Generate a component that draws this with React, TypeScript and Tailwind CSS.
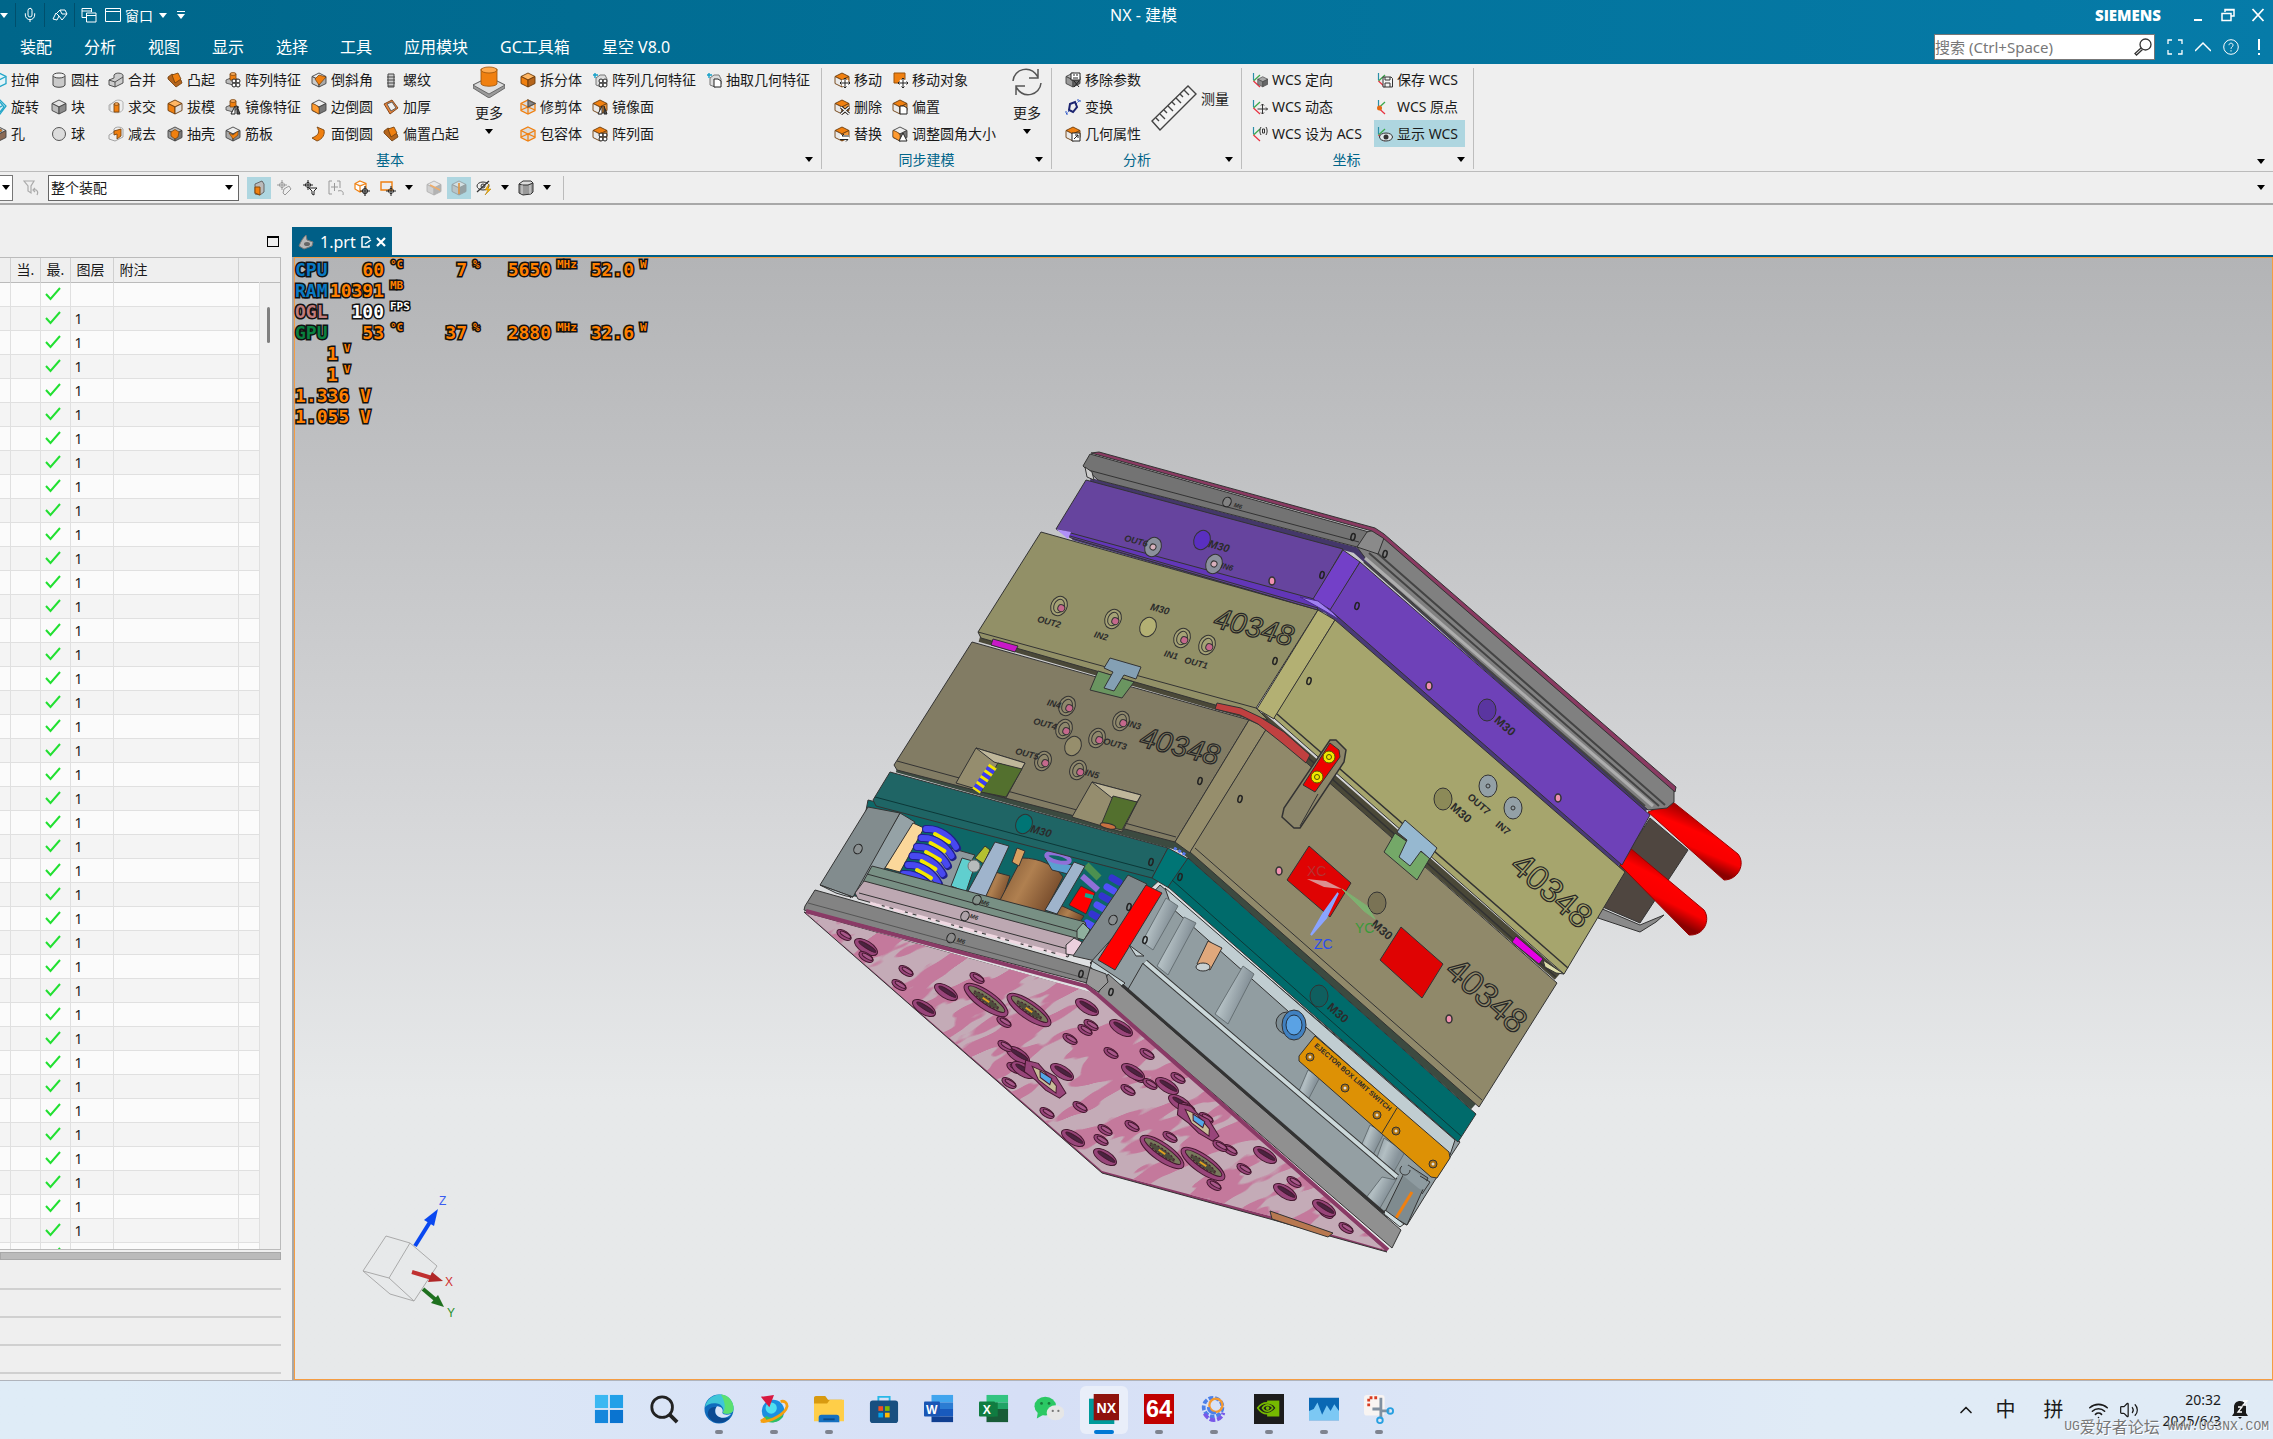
import type { ReactNode } from 'react'
import { ChevronUp, Mic, Volume2, Wifi } from 'lucide-react'

const LINE = '#333333'
const ORANGE = '#f08010'

/* ---------- small icons ---------- */

type Badge = 'grid' | 'mirror' | 'move' | 'x' | 'page' | 'swap' | 'tri' | 'arrow' | 'list' | 'plus'
type Shape =
  | 'cube' | 'cylinder' | 'sphere' | 'box' | 'wedge' | 'hole' | 'union' | 'intersect' | 'subtract' | 'bump' | 'draft'
  | 'shell' | 'boss' | 'rib' | 'chamfer' | 'blend' | 'curl' | 'thread' | 'slab' | 'wire' | 'wirecube' | 'ghost'
  | 'cap' | 'square' | 'link' | 'grey'

const Cube = ({ top = '#e4e4e4', left = '#bdbdbd', right = '#8c8c8c', stroke = '#444' }) => (
  <g stroke={stroke} strokeWidth="0.9" strokeLinejoin="round">
    <path d="M8 1 15 4.5 8 8 1 4.5Z" fill={top} />
    <path d="M1 4.5 8 8V15L1 11.5Z" fill={left} />
    <path d="M15 4.5 8 8V15L15 11.5Z" fill={right} />
  </g>
)

function ShapeArt({ shape }: { shape: Shape }) {
  switch (shape) {
    case 'cube':
      return <Cube />
    case 'grey':
      return <Cube top="#bbb" left="#999" right="#666" />
    case 'cylinder':
      return (
        <g stroke="#444" strokeWidth="1">
          <path d="M2 4V13C3 16 13 16 14 13V4Z" fill="#c9c9c9" />
          <ellipse cx="8" cy="3.5" rx="6" ry="2.5" fill="#f0f0f0" />
        </g>
      )
    case 'sphere':
      return <circle cx="8" cy="8" r="6.5" fill="#dcdcdc" stroke="#555" />
    case 'box':
      return (
        <g stroke="#22a5c8" strokeWidth="1.3" fill="#e4f4f8">
          <path d="M8 1 15 4.5V11.5L8 15 1 11.5V4.5Z" />
          <path d="M8 8V15M1 4.5 8 8 15 4.5" fill="none" />
        </g>
      )
    case 'wedge':
      return (
        <g stroke="#22a5c8" strokeWidth="1.3" fill="#d7eef5">
          <path d="M2 6 9 1 15 7 9 15 7 9Z" />
          <path d="M9 3 13 8 9 13M7 9 11 7" fill="none" />
        </g>
      )
    case 'hole':
      return (
        <>
          <Cube top="#ddd" left="#d58b55" right="#8a6a55" />
          <ellipse cx="8" cy="4.5" rx="3" ry="1.5" fill={ORANGE} stroke="#444" strokeWidth="0.6" />
        </>
      )
    case 'union':
      return (
        <g stroke="#444" strokeWidth="0.9" fill="#ccc">
          <path d="M1 8 6 6V3C8 0 14 1 15 3V11L7 15 1 13Z" />
          <path d="M1 8 7 10 15 5M7 10V15" fill="none" />
        </g>
      )
    case 'intersect':
      return (
        <g stroke="#aaa" strokeWidth="0.9" fill="#eee">
          <path d="M1 6 6 3 6 12 1 11Z" />
          <path d="M6 3C8 0 14 1 15 3V10C14 14 8 15 2 12V6Z" />
          <path d="M6 5H11V13H6Z" fill={ORANGE} stroke="#7a4510" />
          <ellipse cx="8.500" cy="5" rx="2.500" ry="1.300" fill="#ffb060" stroke="#7a4510" />
        </g>
      )
    case 'subtract':
      return (
        <g stroke="#999" strokeWidth="0.9" fill="#eee">
          <path d="M1 9 6 6V3C8 0 14 1 15 3V11L7 15 1 13Z" />
          <path d="M6 5 13 3V10L9 13V8L6 9Z" fill={ORANGE} stroke="#7a4510" />
        </g>
      )
    case 'bump':
      return (
        <g stroke="#6d3c0c" strokeWidth="0.8">
          <path d="M1 5 5 2 14 8 15 11 9 15 1 7Z" fill="#b5651d" />
          <path d="M5 3 11 1 14 7 8 11Z" fill={ORANGE} />
        </g>
      )
    case 'draft':
      return <Cube top="#ffb765" left={ORANGE} right="#ddd" stroke="#6d3c0c" />
    case 'shell':
      return (
        <>
          <Cube top="#bbb" left="#999" right="#777" />
          <path d="M8 3.500 12 6 11 11 8 13 4 10V6Z" fill={ORANGE} stroke="#6d3c0c" strokeWidth="0.7" />
        </>
      )
    case 'boss':
      return (
        <g stroke="#444" strokeWidth="0.8">
          <path d="M1 8 8 5 14 8 8 13 1 11Z" fill="#bbb" />
          <path d="M5 2H11V8H5Z" fill={ORANGE} stroke="#7a4510" />
          <ellipse cx="8" cy="2" rx="3" ry="1.400" fill="#ffb060" stroke="#7a4510" />
        </g>
      )
    case 'rib':
      return (
        <>
          <Cube top="#eee" left="#aaa" right="#888" />
          <path d="M4 7 8 9 13 5V9L8 13Z" fill={ORANGE} stroke="#6d3c0c" strokeWidth="0.6" />
        </>
      )
    case 'chamfer':
      return (
        <>
          <Cube top="#eee" left="#ccc" right="#aaa" />
          <path d="M8 3 15 5 8 13 4 7Z" fill={ORANGE} stroke="#6d3c0c" strokeWidth="0.7" />
        </>
      )
    case 'blend':
      return (
        <>
          <Cube top="#eee" left={ORANGE} right="#777" />
          <path d="M1 4.500C4 5 7 7 8 9V15L1 11Z" fill="#ff9b30" stroke="#6d3c0c" strokeWidth="0.6" />
        </>
      )
    case 'curl':
      return <path d="M6 1C9 6 8 9 1 12L6 15C12 13 14 8 13 4Z" fill={ORANGE} stroke="#7a4510" strokeWidth="0.9" />
    case 'thread':
      return (
        <g stroke="#444" strokeWidth="1" fill="#ccc">
          <path d="M5 2H11V15H5Z" />
          <path d="M4 5H12M4 8H12M4 11H12M5 14H11" />
        </g>
      )
    case 'slab':
      return (
        <g strokeWidth="0.9">
          <path d="M1 5 9 1 15 9 7 15Z" fill="#e5843c" stroke="#7a3c10" />
          <path d="M4 5 9 3 13 9 8 12Z" fill="#eee" stroke="#555" />
        </g>
      )
    case 'wire':
    case 'wirecube':
      return (
        <g stroke={ORANGE} strokeWidth="1.300" fill="#dcdcdc">
          <path d="M8 1 15 4.500V11.500L8 15 1 11.500V4.500Z" />
          <path d="M1 4.500 8 8 15 4.500M8 8V15M1 11 8 8 15 11" fill="none" />
          {shape === 'wirecube' && <path d="M8 1 15 4.500 8 8Z" fill="#888" stroke="#555" />}
        </g>
      )
    case 'ghost':
      return (
        <g>
          <path d="M4 6 8 3 13 3 15 7V12L9 15 4 13Z" fill="#ddd" stroke="#777" />
          <path d="M1 3H6M3 1V6" stroke="#16a0c8" strokeWidth="1.400" />
        </g>
      )
    case 'cap':
      return <Cube top={ORANGE} left="#e9e9e9" right="#f59a3a" stroke="#6d3c0c" />
    case 'square':
      return <path d="M2 1H13V11H2Z" fill={ORANGE} stroke="#9a5208" />
    case 'link':
      return (
        <g fill="none">
          <path d="M1 15 5 11M11 5 15 1M12 1H15V4M1 12V15H4" stroke="#2b55c8" strokeDasharray="2 1" />
          <path d="M5 5 10 3 12 8 8 13 4 11Z" stroke="#1c2470" strokeWidth="2" />
        </g>
      )
  }
}

function BadgeArt({ badge }: { badge: Badge }) {
  const p = { stroke: '#222', strokeWidth: 1, fill: '#fff' }
  switch (badge) {
    case 'grid':
      return <g {...p}><circle cx="9" cy="9" r="2" /><circle cx="13" cy="9" r="2" /><circle cx="9" cy="13" r="2" /><circle cx="13" cy="13" r="2" /></g>
    case 'mirror':
      return <g {...p}><path d="M10 7V15H6Z" /><path d="M12 7V15H15Z" fill="#555" /></g>
    case 'move':
      return <g><circle cx="11" cy="11" r="4" fill="#fff" /><path d="M11 6V16M6 11H16M9.500 7.500 11 6 12.500 7.500M9.500 14.500 11 16 12.500 14.500M7.500 9.500 6 11 7.500 12.500M14.500 9.500 16 11 14.500 12.500" stroke="#222" fill="none" /></g>
    case 'x':
      return <g><path d="M7 8 15 15M15 8 7 15" stroke="#222" strokeWidth="3" /><path d="M7 8 15 15M15 8 7 15" stroke="#fff" strokeWidth="1.200" /></g>
    case 'page':
      return <path d="M8 7H12L15 9V15H8Z" {...p} />
    case 'swap':
      return <g><path d="M6 9H15V14H6Z" fill="#fff" /><path d="M15 10H8L10 8M6 13.500H14L12 15.500" stroke="#222" fill="none" /></g>
    case 'tri':
      return <path d="M11 7 15 15H7Z" {...p} />
    case 'arrow':
      return <g><path d="M7 7H15V15H7Z" {...p} /><path d="M9 13 13 9M10 9H13V12" stroke="#222" fill="none" /></g>
    case 'list':
      return <g><path d="M6 1H15V8H6Z" {...p} /><path d="M8 3H10M11 3H13M8 6H13M9 9 14 15M14 9 9 15" stroke="#222" /></g>
    case 'plus':
      return <path d="M10 5V15M5 10H15" stroke="#222" />
  }
}

const PartIcon = ({ shape, badge }: { shape: Shape; badge?: Badge }) => (
  <svg viewBox="0 0 16 16" className="size-4 shrink-0">
    <ShapeArt shape={shape} />
    {badge && <BadgeArt badge={badge} />}
  </svg>
)

const WcsIcon = ({ kind }: { kind: 'orient' | 'move' | 'acs' | 'save' | 'origin' | 'eye' }) => (
  <svg viewBox="0 0 16 16" className="size-4 shrink-0" fill="none">
    <path d="M1.500 1V8" stroke="#2a8fa8" strokeWidth="1.200" />
    <path d="M1.500 9 8 3" stroke="#3aa84a" strokeWidth="1.200" />
    <path d="M1.500 9 8 15" stroke="#e8303f" strokeWidth="1.200" />
    {kind === 'orient' && <g transform="translate(5 4) scale(.72)"><Cube top="#aaa" left="#888" right="#666" /></g>}
    {kind === 'move' && <path d="M10.500 5V15M5.500 10H15.500M9 6.500 10.500 5 12 6.500M9 13.500 10.500 15 12 13.500M14 8.500 15.500 10 14 11.500" stroke="#333" />}
    {kind === 'acs' && <path d="M9 1C7.500 3 7.500 7 9 9M14 1C15.500 3 15.500 7 14 9M10.500 3H12.500V7H10.500Z" stroke="#333" />}
    {kind === 'save' && <g stroke="#333"><path d="M6 5H14L15.500 6.500V15H6Z" fill="#f4f4f4" /><path d="M8 5V8H13V5M8 15V11H13V15" /></g>}
    {kind === 'origin' && <circle cx="2.500" cy="9" r="2.500" fill="#e46a14" />}
    {kind === 'eye' && <g><ellipse cx="9" cy="11" rx="6.500" ry="4" fill="#dfe8ea" stroke="#333" /><circle cx="9" cy="11" r="2.500" fill="#333" /></g>}
  </svg>
)

const Caret = ({ light }: { light?: boolean }) => (
  <svg viewBox="0 0 8 5" className={light ? 'h-[5px] w-2 shrink-0 fill-white' : 'h-[5px] w-2 shrink-0 fill-black'}>
    <path d="M0 0H8L4 5Z" />
  </svg>
)

const CaretButton = ({ label }: { label: string }) => (
  <button aria-label={label} className="flex h-5 w-6 items-center justify-center"><Caret /></button>
)

/* ---------- title bar ---------- */

const MENUS = ['装配', '分析', '视图', '显示', '选择', '工具', '应用模块', 'GC工具箱', '星空 V8.0']

function TitleBar() {
  return (
    <header className="shrink-0 bg-linear-to-r from-[#00668a] via-[#02729a] to-[#067ba8] text-white">
      <div className="grid h-[30px] grid-cols-[1fr_auto_1fr] items-center">
        <div className="flex h-6 items-center text-[14px]">
          <div className="flex w-[15px] shrink-0"><Caret light /></div>
          <button aria-label="语音" className="flex h-6 w-[30px] items-center justify-center border-x border-[#004f6c]"><Mic size={16} strokeWidth={1.5} /></button>
          <button aria-label="重复命令" className="flex h-6 w-[30px] items-center justify-center border-r border-[#004f6c]">
            <svg viewBox="0 0 16 16" className="size-4" fill="none" stroke="#fff"><path d="M1 12 4 6 7 9 5 13ZM5 6 8 3 13 3 15 7 10 13 7 9M8 3 10 7 15 7" /></svg>
          </button>
          <button aria-label="层叠窗口" className="ml-1.5">
            <svg viewBox="0 0 16 16" className="size-4" fill="none" stroke="#fff"><path d="M5 10.500H1V1.500H10.500V5M1 4H10M5.500 6H15V15H5.500ZM5.500 8.500H15" /></svg>
          </button>
          <button className="ml-2 flex items-center gap-1">
            <svg viewBox="0 0 16 16" className="size-4" fill="none" stroke="#fff"><path d="M.5 1.500H15.500V14.500H.5ZM.5 4.500H15.500" /></svg>
            <span>窗口</span>
            <span className="ml-0.5"><Caret light /></span>
          </button>
          <button aria-label="自定义" className="ml-2.5 flex flex-col items-center gap-0.5 border-t border-white pt-0.5"><Caret light /></button>
        </div>
        <h1 className="pl-3.5 text-base">NX - 建模</h1>
        <div className="flex items-center justify-end gap-4 pr-2">
          <span className="mr-3.5 font-['Open_Sans','Liberation_Sans',sans-serif] text-[15px] font-extrabold">SIEMENS</span>
          <button aria-label="最小化" className="flex h-4 w-3.5 items-end justify-center pb-0.5"><span className="h-0.5 w-2 bg-white" /></button>
          <button aria-label="还原" className="w-3.5">
            <svg viewBox="0 0 14 14" className="size-3.5" fill="none" stroke="#fff" strokeWidth="1.500"><path d="M4 4V1.500H13V8H10M1 5.500H10V12.500H1ZM4 2H13" /></svg>
          </button>
          <button aria-label="关闭" className="w-3.5">
            <svg viewBox="0 0 14 14" className="size-3.5" stroke="#fff" strokeWidth="1.800"><path d="M1.500 1 12.500 13M12.500 1 1.500 13" /></svg>
          </button>
        </div>
      </div>
      <div className="flex h-[34px] items-center justify-between">
        <nav className="flex gap-8 pl-5 text-base">
          {MENUS.map(m => <button key={m} className="whitespace-nowrap">{m}</button>)}
        </nav>
        <div className="flex items-center gap-3 pr-1.5">
          <label className="flex h-[26px] w-[221px] items-center border border-[#777] bg-white pr-0.5">
            <input type="text" aria-label="搜索" placeholder="搜索 (Ctrl+Space)" className="min-w-0 flex-1 text-[15px] text-black outline-none placeholder:text-[#777]" />
            <svg viewBox="0 0 18 18" className="size-[18px]" fill="none" stroke="#333" strokeWidth="1.300"><circle cx="11.500" cy="6.500" r="5.500" /><path d="M7 10 1 15.500 2.500 17 8.500 11.500" /></svg>
          </label>
          <button aria-label="全屏">
            <svg viewBox="0 0 16 16" className="size-4" fill="none" stroke="#fff" strokeWidth="1.300"><path d="M1 5V1H5M11 1H15V5M15 11V15H11M5 15H1V11" /></svg>
          </button>
          <button aria-label="折叠功能区">
            <svg viewBox="0 0 16 16" className="size-4" fill="none" stroke="#fff" strokeWidth="1.500"><path d="M0 12 8 4 16 12" /></svg>
          </button>
          <button aria-label="帮助">
            <svg viewBox="0 0 16 16" className="size-4" fill="none" stroke="#fff"><circle cx="8" cy="8" r="7.300" /><path d="M6 6.200C6 3.500 10 3.500 10 6.200 10 8 8 7.800 8 9.800M8 11.200V12.500" /></svg>
          </button>
          <button aria-label="提示" className="flex w-4 justify-center">
            <svg viewBox="0 0 4 16" className="h-4 w-1 fill-white"><path d="M1 0H3V11H1ZM1 14H3V16H1Z" /></svg>
          </button>
        </div>
      </div>
    </header>
  )
}

/* ---------- ribbon ---------- */

type Cmd = { label: string; icon: ReactNode; active?: boolean } | null

const cmd = (label: string, shape: Shape, badge?: Badge): Cmd => ({ label, icon: <PartIcon shape={shape} badge={badge} /> })

const BASIC: { width: string; items: Cmd[] }[] = [
  { width: 'w-[60px]', items: [cmd('拉伸', 'box'), cmd('旋转', 'wedge'), cmd('孔', 'hole')] },
  { width: 'w-[57px]', items: [cmd('圆柱', 'cylinder'), cmd('块', 'cube'), cmd('球', 'sphere')] },
  { width: 'w-[59px]', items: [cmd('合并', 'union'), cmd('求交', 'intersect'), cmd('减去', 'subtract')] },
  { width: 'w-[58px]', items: [cmd('凸起', 'bump'), cmd('拔模', 'draft'), cmd('抽壳', 'shell')] },
  { width: 'w-[86px]', items: [cmd('阵列特征', 'boss', 'grid'), cmd('镜像特征', 'boss', 'mirror'), cmd('筋板', 'rib')] },
  { width: 'w-[72px]', items: [cmd('倒斜角', 'chamfer'), cmd('边倒圆', 'blend'), cmd('面倒圆', 'curl')] },
  { width: 'w-[90px]', items: [cmd('螺纹', 'thread'), cmd('加厚', 'slab'), cmd('偏置凸起', 'bump')] },
]

const BASIC_MORE: { width: string; items: Cmd[] }[] = [
  { width: 'w-[72px]', items: [{ label: '拆分体', icon: <svg viewBox="0 0 16 16" className="size-4 shrink-0"><Cube top="#ffb765" left={ORANGE} right="#b5651d" stroke="#6d3c0c" /></svg> }, cmd('修剪体', 'wirecube'), cmd('包容体', 'wire')] },
  { width: 'w-[114px]', items: [cmd('阵列几何特征', 'ghost', 'grid'), cmd('镜像面', 'cap', 'mirror'), cmd('阵列面', 'cap', 'grid')] },
  { width: 'w-[115px]', items: [cmd('抽取几何特征', 'ghost', 'page')] },
]

function Column({ width, items }: { width: string; items: Cmd[] }) {
  return (
    <div className={`shrink-0 ${width}`}>
      {items.map((c, i) => c && (
        <button key={i} className={c.active ? 'flex h-[27px] w-full items-center gap-1 bg-[#aed6e0] px-[3px] whitespace-nowrap' : 'flex h-[27px] items-center gap-1 whitespace-nowrap'}>
          {c.icon}
          <span>{c.label}</span>
        </button>
      ))}
    </div>
  )
}

function Group({ title, className = '', children }: { title: string; className?: string; children: ReactNode }) {
  return (
    <>
      <section className={`shrink-0 ${className}`}>
        <div className="flex h-[81px]">{children}</div>
        <div className="flex h-6 items-center">
          <h2 className="flex-1 pr-2 text-center text-[#00658a]">{title}</h2>
          <CaretButton label={`${title}选项`} />
        </div>
      </section>
      <div className="my-0.5 w-px shrink-0 bg-[#bdbdbd]" />
    </>
  )
}

const More = ({ icon }: { icon: ReactNode }) => (
  <button className="flex w-8 shrink-0 flex-col items-center">
    {icon}
    <span className="mt-1 whitespace-nowrap">更多</span>
    <span className="mt-1.5"><Caret /></span>
  </button>
)

function Ribbon() {
  return (
    <div className="flex h-[108px] shrink-0 overflow-hidden border-b border-[#bbb] pt-0.5 text-[14px]">
      <Group title="基本" className="-ml-4 pl-[7px]">
        {BASIC.map((c, i) => <Column key={i} {...c} />)}
        <div className="mr-[15px] flex">
          <More
            icon={
              <svg viewBox="0 0 32 32" className="size-8" stroke="#555" strokeWidth="0.800">
                <path d="M0 19 16 11 32 19V22L16 32 0 22Z" fill="#9a9a9a" />
                <path d="M0 19 16 11 32 19 16 28Z" fill="#dedede" />
                <path d="M8 3V18C10 21 22 21 24 18V3Z" fill={ORANGE} stroke="#9a5208" />
                <ellipse cx="16" cy="4" rx="8" ry="3" fill="#ffa94d" stroke="#9a5208" />
              </svg>
            }
          />
        </div>
        {BASIC_MORE.map((c, i) => <Column key={i} {...c} />)}
      </Group>
      <Group title="同步建模" className="pl-3">
        <Column width="w-[58px]" items={[cmd('移动', 'cap', 'move'), cmd('删除', 'cap', 'x'), cmd('替换', 'cap', 'swap')]} />
        <Column width="w-[119px]" items={[cmd('移动对象', 'square', 'move'), cmd('偏置', 'cap', 'page'), cmd('调整圆角大小', 'blend', 'tri')]} />
        <div className="mr-2 flex">
          <More
            icon={
              <svg viewBox="0 0 32 32" className="size-8" fill="none" stroke="#555" strokeWidth="1.500">
                <path d="M2 15C3 3 19-2 27 11M27 3V12H18M30 17C29 29 13 34 5 21M5 29V20H14" />
              </svg>
            }
          />
        </div>
      </Group>
      <Group title="分析" className="pl-[13px]">
        <Column width="w-[86px]" items={[cmd('移除参数', 'grey', 'list'), cmd('变换', 'link'), cmd('几何属性', 'cap', 'arrow')]} />
        <button className="mr-3 flex h-[64px] items-center gap-1 whitespace-nowrap">
          <svg viewBox="0 0 46 46" className="mt-5 size-[46px]" fill="#f4f4f4" stroke="#444" strokeWidth="1.400">
            <path d="M1 36 37 1 45 9 9 45Z" />
            <path d="M5 33 8 36M9 29 14 34M13 25 16 28M17 21 22 26M21 17 24 20M25 13 30 18M29 9 32 12M33 5 38 10" />
          </svg>
          <span>测量</span>
        </button>
      </Group>
      <Group title="坐标" className="pl-2.5">
        <Column
          width="w-[122px]"
          items={[
            { label: 'WCS 定向', icon: <WcsIcon kind="orient" /> },
            { label: 'WCS 动态', icon: <WcsIcon kind="move" /> },
            { label: 'WCS 设为 ACS', icon: <WcsIcon kind="acs" /> },
          ]}
        />
        <div className="mr-2 w-[91px]">
          <div className="pl-[3px]">
            <Column width="w-full" items={[{ label: '保存 WCS', icon: <WcsIcon kind="save" /> }, { label: 'WCS 原点', icon: <WcsIcon kind="origin" /> }]} />
          </div>
          <Column width="w-full" items={[{ label: '显示 WCS', icon: <WcsIcon kind="eye" />, active: true }]} />
        </div>
      </Group>
      <div className="flex flex-1 items-end justify-end">
        <CaretButton label="功能区选项" />
      </div>
    </div>
  )
}

function Tool({ label, active, children }: { label: string; active?: boolean; children: ReactNode }) {
  return (
    <button aria-label={label} className={active ? 'flex h-[22px] w-6 items-center justify-center bg-[#aed6e0]' : 'flex h-[22px] w-[26px] items-center justify-center'}>
      {children}
    </button>
  )
}

const Cross = ({ color = '#222' }) => <path d="M6 0V10M1 5H11M6 2.500A2.500 2.500 0 1 0 6.010 2.500" stroke={color} fill="none" />

function SelectionBar() {
  return (
    <div className="flex h-[33px] shrink-0 items-center border-b-2 border-[#a8a8a8]">
      <button aria-label="类型过滤器" className="flex h-[26px] w-[13px] items-center justify-center border border-l-0 border-[#777] bg-white"><Caret /></button>
      <span className="flex w-[35px] justify-center">
        <svg viewBox="0 0 16 16" className="size-4" fill="none" stroke="#aaa" strokeWidth="1.200"><path d="M1 1H11L8 6V13L5 11V6ZM14 15C16 11 13 9 10 10M12 8 10 10 12 12" /></svg>
      </span>
      <span className="relative flex h-[26px] w-[191px]">
        <select aria-label="选择范围" className="w-full appearance-none border border-[#666] bg-white px-0.5 text-[14px]">
          <option>整个装配</option>
        </select>
        <span className="pointer-events-none absolute top-2.5 right-1.5 flex"><Caret /></span>
      </span>
      <div className="ml-2 flex items-center">
        <Tool label="实体" active><svg viewBox="0 0 16 16" className="size-4"><path d="M4 4 11 1 13 4 13 12 9 15 4 14Z" fill="#bbb" stroke="#666" /><path d="M4 7H9V15L4 13Z" fill={ORANGE} stroke="#8a4a08" /></svg></Tool>
        <Tool label="点"><svg viewBox="0 0 16 16" className="size-4"><Cross color="#999" /><path d="M8 9 13 6 15 9 9 15 7 13Z" fill="none" stroke="#999" /></svg></Tool>
        <Tool label="过滤"><svg viewBox="0 0 16 16" className="size-4"><Cross /><path d="M7 8H15L12 11V15L10 14V11Z" fill="#fff" stroke="#222" /></svg></Tool>
        <Tool label="重置"><svg viewBox="0 0 16 16" className="size-4" fill="none" stroke="#999"><path d="M4 1H1V14H4M9 1H12V8M3 7H10M6.500 3V11M15 15C16 11 13 10 10 11" /></svg></Tool>
        <Tool label="高亮"><svg viewBox="0 0 16 16" className="size-4" fill="#fff" stroke={ORANGE} strokeWidth="1.200"><path d="M6 1 12 3.500V9L6 12 1 9V3.500ZM1 3.500 6 6 12 3.500M6 6V12" /><path d="M11 6V16M6 11H16M11 8.500A2.500 2.500 0 1 0 11.010 8.500" stroke="#222" /></svg></Tool>
        <Tool label="框选"><svg viewBox="0 0 16 16" className="size-4" fill="none"><path d="M1 2H12V10H1Z" stroke={ORANGE} strokeWidth="1.400" /><path d="M11 6V16M6 11H16M11 8.500A2.500 2.500 0 1 0 11.010 8.500" stroke="#222" /></svg></Tool>
        <span className="mr-2 ml-1"><Caret /></span>
        <Tool label="面"><svg viewBox="0 0 16 16" className="size-4 opacity-60"><Cube stroke="#888" /><path d="M4 5 14 10" stroke={ORANGE} strokeWidth="1.500" /></svg></Tool>
        <Tool label="边" active><svg viewBox="0 0 16 16" className="size-4 opacity-70"><Cube stroke="#888" /><path d="M8 3V14" stroke={ORANGE} strokeWidth="1.800" /></svg></Tool>
        <Tool label="显示隐藏"><svg viewBox="0 0 16 16" className="size-4" fill="none"><ellipse cx="7" cy="6" rx="6" ry="4" stroke="#333" /><circle cx="7" cy="6" r="2" stroke="#333" /><path d="M1 12 13 1" stroke="#333" strokeWidth="1.300" /><path d="M13 4 9 10H12L9 15 15 9H12Z" fill="#ffb900" stroke="#a87400" strokeWidth="0.500" /></svg></Tool>
        <span className="mr-1 ml-1"><Caret /></span>
        <Tool label="渲染样式"><svg viewBox="0 0 16 16" className="size-4"><path d="M1 4V13L5 15 13 14 15 12V3Z" fill="#999" stroke="#333" /><path d="M1 4 5 1 13 1 15 3 10 5 4 5Z" fill="#ddd" stroke="#333" /><path d="M4 5V14M12 5V14" stroke="#ddd" /></svg></Tool>
        <span className="ml-1"><Caret /></span>
        <span className="ml-3 h-6 w-px bg-[#bbb]" />
      </div>
      <span className="flex-1" />
      <CaretButton label="选择条选项" />
    </div>
  )
}

/* ---------- part navigator ---------- */

// assembly root and the row under the fold carry no layer number
const ROWS = ['', ...Array.from({ length: 39 }, () => '1'), '']

function Navigator() {
  return (
    <aside className="flex w-[281px] shrink-0 flex-col">
      <div className="flex h-[52px] shrink-0 items-end justify-end">
        <button aria-label="最大化面板" className="mr-0.5 mb-2.5 h-[11px] w-3 border border-t-2 border-black" />
      </div>
      <div className="relative min-h-0 flex-1 overflow-hidden border-t border-r border-b border-[#bbb]">
        <table className="w-full table-fixed border-collapse text-[14px]">
          <colgroup>
            <col className="w-2.5" /><col className="w-[30px]" /><col className="w-[30px]" /><col className="w-[43px]" /><col className="w-[125px]" /><col className="w-[21px]" /><col />
          </colgroup>
          <thead>
            <tr className="h-6 border-b border-[#bbb] text-left [&>th]:overflow-hidden [&>th]:border-r [&>th]:border-[#d0d0d0] [&>th]:font-normal [&>th]:whitespace-nowrap">
              <th />
              <th className="pl-1.5">当.</th>
              <th className="pl-1.5">最.</th>
              <th className="pl-1.5">图层</th>
              <th className="pl-1.5">附注</th>
              <td /><td />
            </tr>
          </thead>
          <tbody>
            {ROWS.map((layer, i) => (
              <tr key={i} className="h-6 odd:bg-[#fbfbfb] even:bg-[#f4f4f4] [&>td]:border-r [&>td]:border-b [&>td]:border-[#e0e0e0] [&>td]:p-0">
                <td /><td />
                <td>
                  <svg viewBox="0 0 16 14" className="ml-1 h-3.5 w-4" fill="none" stroke="#22e032" strokeWidth="2"><path d="M1 7 5.500 12 15 1" /></svg>
                </td>
                <td><span className="pl-1">{layer}</span></td>
                <td /><td />
                <td className="border-none! bg-[#efefef]" />
              </tr>
            ))}
          </tbody>
        </table>
        <div className="absolute top-[49px] right-2.5 h-9 w-[3px] rounded-full bg-[#808080]" />
      </div>
      <div className="mt-0.5 h-2 shrink-0 border border-[#a8a8a8] bg-[#bbb]" />
      <div className="shrink-0 pt-0.5 pb-1.5">
        {['依存关系', '细节', '预览', '属性'].map(s => (
          <div key={s} aria-label={s} className="h-7 border-b-2 border-[#d0d0d0]" />
        ))}
      </div>
    </aside>
  )
}

/* ---------- hardware monitor ---------- */

type OsdRow = { name: string; color: string; cells: [string, string][]; white?: boolean }

const OSD: OsdRow[] = [
  { name: 'CPU', color: 'text-[#0a7ac4]', cells: [['60', '°C'], ['7', '%'], ['5650', 'MHz'], ['52.0', 'W']] },
  { name: 'RAM', color: 'text-[#0a7ac4]', cells: [['10391', 'MB']] },
  { name: 'OGL', color: 'text-[#c07c7c]', cells: [['100', 'FPS']], white: true },
  { name: 'GPU', color: 'text-[#0a8040]', cells: [['53', '°C'], ['37', '%'], ['2880', 'MHz'], ['32.6', 'W']] },
]

const Osd = () => (
  <div className="absolute top-0.5 left-px font-['DejaVu_Sans_Mono','Liberation_Mono',monospace] text-[18px] leading-[21px] font-bold whitespace-pre text-[#ff8000] [-webkit-text-stroke:3px_#111] [paint-order:stroke_fill]">
    {OSD.map(r => (
      <div key={r.name} className="grid h-[21px] grid-cols-[34px_55px_41px_42px_38px_46px_37px_46px_20px]">
        <span className={r.color}>{r.name}</span>
        {r.cells.map(([v, u]) => (
          <span key={u} className={r.white ? 'contents text-white' : 'contents'}>
            <span className="flex justify-end">{v}</span>
            <span className="pl-1.5 text-[11px] leading-3">{u}</span>
          </span>
        ))}
      </div>
    ))}
    {['a', 'b'].map(k => (
      <div key={k} className="flex h-[21px] pl-8">
        <span>1</span>
        <span className="pl-1.5 text-[11px] leading-3">V</span>
      </div>
    ))}
    <div>1.336 V</div>
    <div>1.055 V</div>
  </div>
)

/* ---------- mould model ---------- */

function Face({ p, fill, stroke = LINE }: { p: string; fill: string; stroke?: string }) {
  return <polygon points={p} fill={fill} stroke={stroke} strokeWidth="1" strokeLinejoin="round" />
}

function Mark({ x, y, r, size, children, outline }: { x: number; y: number; r: number; size: number; children: string; outline?: boolean }) {
  return (
    <text
      transform={`translate(${x} ${y}) rotate(${r})`}
      textAnchor="middle"
      dominantBaseline="central"
      fontSize={size}
      fontStyle={r < 20 ? 'italic' : 'normal'}
      fontWeight={outline ? 'normal' : 'bold'}
      fontFamily={outline ? "'Liberation Sans Narrow', 'Liberation Sans', sans-serif" : undefined}
      fill={outline ? 'none' : '#2b2b2b'}
      stroke={outline ? '#262626' : 'none'}
      strokeWidth={outline ? 1.2 : 0}
    >
      {children}
    </text>
  )
}

// [x, y, kind, fill]: p = ported hole, d = disc, h = plain hole
const LEFT_HOLES: [number, number, 'p' | 'd' | 'h', string][] = [
  [1059, 606, 'p', '#a5a275'], [1113, 619, 'p', '#a5a275'], [1182, 638, 'p', '#a5a275'], [1207, 645, 'p', '#a5a275'],
  [1148, 627, 'h', '#b3b073'],
  [1067, 706, 'p', '#8f886c'], [1121, 721, 'p', '#8f886c'], [1064, 729, 'p', '#8f886c'], [1097, 738, 'p', '#8f886c'],
  [1043, 761, 'p', '#8f886c'], [1078, 770, 'p', '#8f886c'], [1073, 746, 'h', '#968e6c'],
  [1153, 547, 'd', '#8b909c'], [1214, 564, 'd', '#8b909c'], [1202, 540, 'h', '#5a2fc0'], [1024, 824, 'h', '#007575'],
]

const RIGHT_HOLES: [number, number, string, boolean][] = [
  [1487, 710, '#5a35a0', false], [1443, 799, '#8c8a58', false], [1377, 903, '#7a7355', false], [1319, 996, '#0f5f5f', false],
  [1488, 786, '#93a0a6', true], [1513, 808, '#93a0a6', true],
]

const PINS: [number, number][] = [[1272, 581], [1279, 871], [1429, 686], [1558, 798], [1449, 1019]]

const DOTS: [number, number][] = [
  [1322, 575], [1275, 661], [1309, 681], [1357, 606], [1200, 781], [1240, 799], [1151, 862], [1180, 877], [1353, 537],
  [1385, 554], [1081, 974], [1111, 992], [1129, 907], [1145, 940],
]

const LEFT_MARKS: [number, number, string, number][] = [
  [1136, 541, 'OUT6', 9], [1219, 546, 'M30', 11], [1227, 567, 'IN6', 8], [1238, 506, 'M6', 6], [1049, 622, 'OUT2', 9],
  [1101, 636, 'IN2', 9], [1160, 609, 'M30', 10], [1171, 655, 'IN1', 9], [1196, 663, 'OUT1', 9], [1054, 704, 'IN4', 9],
  [1045, 724, 'OUT4', 9], [1134, 725, 'IN3', 9], [1115, 744, 'OUT3', 9], [1027, 754, 'OUT5', 9], [1092, 774, 'IN5', 9],
  [1041, 831, 'M30', 11], [985, 903, 'M6', 6], [974, 917, 'M6', 6], [961, 941, 'M6', 6],
]

const RIGHT_MARKS: [number, number, string, number][] = [
  [1505, 726, 'M30', 12], [1479, 804, 'OUT7', 10], [1503, 828, 'IN7', 10], [1461, 813, 'M30', 12], [1382, 930, 'M30', 12],
  [1338, 1013, 'M30', 12],
]

const SLOTS: [number, number][] = [
  [844, 935], [866, 947], [866, 957], [906, 971], [946, 992], [977, 978], [899, 985], [924, 1008], [1004, 1022],
  [1070, 1039], [1087, 1007], [1091, 1025], [1085, 1030], [1121, 1028], [1111, 1053], [1147, 1054], [1062, 1072],
  [1009, 1083], [1178, 1078], [1167, 1086], [1128, 1090], [1138, 1077], [1133, 1072], [1150, 1084], [1047, 1113],
  [1073, 1138], [1105, 1130], [1101, 1140], [1105, 1157], [1132, 1126], [1170, 1137], [1265, 1155], [1244, 1169],
  [1294, 1182], [1285, 1192], [1214, 1185], [1326, 1213], [1324, 1208], [1346, 1228], [1080, 1107], [1018, 1055],
  [1005, 1046], [1014, 1068], [1023, 1070], [1230, 1150], [1220, 1146], [1180, 1103], [1188, 1108], [1206, 1118],
]

function Mould() {
  return (
    <g>
      <defs>
        <linearGradient id="rod" x1="0" y1="0" x2=".8" y2=".4"><stop offset="0" stopColor="#87939a" /><stop offset=".5" stopColor="#b3bfc3" /><stop offset="1" stopColor="#87939a" /></linearGradient>
        <linearGradient id="copper" x1="0" y1="0" x2="1" y2=".5"><stop offset="0" stopColor="#7a5230" /><stop offset=".5" stopColor="#b08050" /><stop offset="1" stopColor="#74492a" /></linearGradient>
        <linearGradient id="redrod" x1=".6" y1=".2" x2=".35" y2=".7"><stop offset="0" stopColor="#a80000" /><stop offset=".35" stopColor="#ff0000" /><stop offset=".7" stopColor="#f80000" /><stop offset="1" stopColor="#8a0000" /></linearGradient>
        <filter id="marble" x="0" y="0" width="100%" height="100%" colorInterpolationFilters="sRGB">
          <feTurbulence type="fractalNoise" baseFrequency="0.011 0.05" numOctaves="3" seed="8" />
          <feColorMatrix values="0 0 0 0 .768  0 0 0 0 .475  0 0 0 0 .612  0 0 0 30 -14.700" />
        </filter>
        <clipPath id="base"><path d="M806 913 1098 994 1385 1250 1333 1235 1270 1216 1102 1171Z" /></clipPath>
      </defs>

      {/* parts behind the stack */}
      <Face p="1600,908 1640,925 1664,915 1656,922 1640,932 1598,918" fill="#8a8a8a" />
      <Face p="1610,880 1650,818 1688,850 1640,923 1598,905" fill="#4f4640" />
      <path d="M1648 812 1673 802 1738 854C1746 864 1738 880 1724 880Z" fill="url(#redrod)" stroke="#900" />
      <path d="M1620 865 1630 848 1704 910C1711 920 1704 936 1689 935Z" fill="url(#redrod)" stroke="#900" />

      {/* base face */}
      <Face p="804,912 1098,995 1387,1252 1333,1237 1270,1219 1102,1173" fill="#8a3a66" />
      <g clipPath="url(#base)">
        <rect x="800" y="900" width="600" height="360" fill="#c4abb7" />
        <g transform="rotate(-28 1100 1080)"><rect x="700" y="780" width="800" height="600" filter="url(#marble)" /></g>
      </g>
      <path d="M1270 1211 1333 1233 1328 1237 1272 1219Z" fill="#b87850" stroke={LINE} />
      <g fill="#98457a" stroke="#45182f" strokeWidth="1">
        {SLOTS.map(([x, y], i) => (
          <g key={i} transform={`translate(${x} ${y}) rotate(32)`}>
            <ellipse rx={i % 3 === 1 ? 13 : 8} ry={i % 3 === 1 ? 6 : 4} />
            <ellipse rx={i % 3 === 1 ? 10 : 6} ry="2" cx="1" cy="-1" fill={i % 3 === 1 ? '#4a2440' : '#a8588a'} />
          </g>
        ))}
        {[[986, 1000], [1029, 1010], [1162, 1152], [1203, 1164]].map(([x, y]) => (
          <g key={x} transform={`translate(${x} ${y}) rotate(35)`}>
            <ellipse rx="26" ry="9" />
            <ellipse rx="22" ry="5" cy="-1" fill="#777a5c" />
            <ellipse rx="15" ry="3" fill="#4d4d3c" strokeDasharray="2 2" />
            <path d="M-4 0H4" stroke="#e0a020" strokeWidth="2" />
          </g>
        ))}
        {[[1044, 1079], [1197, 1122]].map(([x, y]) => (
          <g key={x} transform={`translate(${x} ${y}) rotate(37)`}>
            <path d="M-26-4-14-9-4-7 8-9 26-2 24 6 8 8-6 6-20 6Z" />
            <path d="M-17-3-4-6 14-2 18 4-4 4Z" fill="#c8bc98" />
            <path d="M-8-4 6-5 8 1-4 1Z" fill="#52a8e8" />
          </g>
        ))}
      </g>

      {/* interior of the ejector box, left side */}
      <Face p="868,800 1165,875 1090,945 850,895" fill="#0e6767" />
      <Face p="900,813 915,822 885,868 850,898" fill="#95a2a6" />
      <Face p="913,823 924,828 900,872 885,868" fill="#fbd79a" />
      <Face p="940,845 975,855 955,888 925,882" fill="#8d999d" />
      <g strokeLinecap="round" fill="none">
        {[0, 1, 2, 3, 4, 5].map(i => (
          <g key={i} transform={`translate(${-4.5 * i} ${9 * i})`}>
            <path d="M926 829C940 828 952 838 957 848" stroke="#20208c" strokeWidth="8" />
            <path d="M926 829C940 828 951 838 956 847" stroke="#4848f0" strokeWidth="6" />
            <path d="M935 834 949 842" stroke="#f4e800" strokeWidth="4" />
          </g>
        ))}
      </g>
      <Face p="962,858 976,862 966,892 951,886" fill="#60cfcf" />
      <Face p="975,858 985,846 990,850 984,864" fill="#b4c030" />
      <circle cx="974" cy="866" r="6" fill="#b8bcbc" stroke="#777" />
      <path d="M995 872 1010 876 1000 906 982 899Z" fill="url(#copper)" stroke={LINE} />
      <path d="M1022 858C1040 858 1056 866 1063 877L1042 917 998 904Z" fill="url(#copper)" stroke={LINE} />
      <path d="M1060 905 1084 916 1078 925 1056 917Z" fill="url(#copper)" stroke={LINE} />
      <Face p="995,842 1009,846 985,898 967,893" fill="#9fb4cc" />
      <Face p="1017,848 1025,851 1019,866 1012,862" fill="#d8a060" />
      <Face p="1045,858 1072,865 1068,874 1052,870" fill="#5ba0d0" />
      <ellipse cx="1058" cy="858" rx="12" ry="4" transform="rotate(14 1058 858)" fill="none" stroke="#9070d8" strokeWidth="4" />
      <path d="M1082 876 1098 890" stroke="#9070d8" strokeWidth="6" />
      <path d="M1086 865 1099 878" stroke="#4c9050" strokeWidth="7" />
      <Face p="1074,862 1085,866 1057,914 1045,910" fill="#9fb4cc" />
      <Face p="1081,886 1095,893 1086,914 1069,905" fill="#ff0000" />
      <path d="M1085 895 1093 897" stroke="#10a890" strokeWidth="4" />
      <g strokeLinecap="round">
        {[0, 1, 2, 3, 4, 5].map(i => (
          <path key={i} d="M1112 878 1119 882" transform={`translate(${-5 * i} ${9 * i})`} stroke={i % 2 ? '#5050f8' : '#3434d0'} strokeWidth="7" />
        ))}
      </g>

      {/* end blocks and bars */}
      <Face p="868,807 900,813 853,897 820,885" fill="#828c8e" />
      <path d="M820 885 853 897 846 896 836 893Z" fill="#c5d2d5" stroke={LINE} />
      <Face p="872,866 1085,922 1088,932 1078,940 863,882" fill="#789084" />
      <path d="M867 874 1079 932" stroke={LINE} />
      <Face p="1077,930 1083,923 1090,930 1084,940 1077,938" fill="#90b09e" />
      <Face p="864,881 1076,938 1068,957 858,899 855,893" fill="#bda8b2" />
      <path d="M859 893 1068 949" stroke={LINE} />
      <path d="M870 903 1066 956" stroke="#f0d8e2" strokeWidth="3" strokeDasharray="12 3 5 4" />
      <Face p="1066,945 1074,938 1082,942 1078,956 1066,954" fill="#ecd0de" />
      <Face p="1128,875 1147,884 1100,962 1073,956" fill="#7f888b" />

      {/* interior, right side */}
      <Face p="1160,885 1460,1142 1435,1180 1407,1225 1375,1212 1127,993 1090,963" fill="#919da1" />
      <path d="M1165 888 1455 1140 1450 1155 1172 908Z" fill="#c0cdd1" stroke={LINE} />
      {[
        '1166,898 1178,906 1153,950 1142,942', '1184,917 1196,923 1168,975 1157,966', '1243,966 1254,974 1228,1024 1215,1014',
        '1308,1070 1320,1077 1308,1100 1299,1091', '1370,1125 1384,1133 1372,1157 1361,1146', '1384,1138 1405,1152 1392,1175 1376,1160',
      ].map(p => <polygon key={p} points={p} fill="url(#rod)" stroke="#667074" />)}
      <Face p="1208,941 1222,948 1210,970 1197,964" fill="#e0a87c" />
      <ellipse cx="1203" cy="967" rx="7" ry="4" fill="#c8d0d2" stroke={LINE} />
      <Face p="1143,963 1397,1178 1373,1209 1127,991" fill="#949fa3" />
      <path d="M1145 962 1397 1177" stroke={LINE} strokeWidth="6" />
      <path d="M1145 962 1397 1177" stroke="#cbd8da" strokeWidth="4" />
      <polygon points="1382,1177 1396,1180 1380,1208 1365,1199" fill="url(#rod)" stroke="#667074" />
      <Face p="1408,1165 1428,1178 1407,1225 1385,1212" fill="#7f8b8f" />
      <path d="M1412 1192 1396 1218" stroke={ORANGE} strokeWidth="3" />
      <path d="M1405 1170 1422 1184" stroke="#8e9ba0" strokeWidth="11" strokeLinecap="round" />
      <path d="M1402 1166A5 5 0 1 0 1410 1170M1420 1176 1430 1182 1422 1194" fill="none" stroke={LINE} />
      <path d="M1385 1210 1404 1224 1400 1227 1384 1214Z" fill="#d0dcde" stroke={LINE} />
      <Face p="1146,885 1162,893 1115,970 1098,960" fill="#ff0000" />
      <Face p="1092,961 1125,983 1122,986 1090,968" fill="#c5d2d5" />
      <path d="M1129 945 1144 956 1136 956Z" fill="#c5d2d5" stroke={LINE} />

      {/* clamp rail */}
      <Face p="815,890 1092,968 1087,983 804,910 805,906" fill="#838383" />
      <path d="M808 903 1088 979" stroke="#555" />
      <Face p="1108,974 1401,1230 1392,1248 1098,994" fill="#909090" />
      <Face p="1090,968 1106,974 1108,982 1098,992 1086,984" fill="#989898" />
      <path d="M806 911 1086 986 1098 995 1388 1250" fill="none" stroke="#8a3a66" strokeWidth="4" />
      <path d="M1122 985 1384 1213" stroke={LINE} strokeWidth="3" />

      {/* shadowed seams between plates */}
      <path d="M980 637 1262 718 1558 976" fill="none" stroke="#4a4838" strokeWidth="10" />
      <path d="M897 768 1182 847 1474 1106" fill="none" stroke="#3c4a40" strokeWidth="9" />
      <path d="M1073 537 1326 610 1620 864" fill="none" stroke="#4a3a78" strokeWidth="6" />
      <path d="M1090 481 1355 550 1646 811" fill="none" stroke="#44376a" strokeWidth="6" />

      {/* teal plate */}
      <Face p="890,772 1168,848 1152,878 876,806 873,800" fill="#1f6565" />
      <path d="M875 797 1154 871" stroke="#0c3838" />
      <Face p="1168,848 1190,860 1169,888 1152,878" fill="#007575" />
      <Face p="1188,858 1476,1114 1458,1142 1168,887" fill="#006b6b" />
      <path d="M1172 880 1461 1136" stroke="#0c3838" />
      <path d="M1174 848 1186 855" stroke="#5577ee" strokeWidth="3" strokeDasharray="3 2" />

      {/* brown plate */}
      <Face p="972,642 1249,720 1175,842 897,770 894,765" fill="#827c64" />
      <path d="M897 761 1176 837" stroke={LINE} />
      <Face p="1249,720 1267,728 1190,853 1175,842" fill="#968e6c" />
      <Face p="1267,728 1557,983 1479,1107 1190,852" fill="#90896a" />
      <path d="M1195 848 1482 1100" stroke={LINE} />
      <Face p="976,748 1025,763 1006,798 956,783" fill="#958d6e" />
      <Face p="976,748 1025,763 1021,770 994,762" fill="#bfb79a" />
      <Face p="998,763 1022,769 1006,797 981,792" fill="#53702e" />
      <path d="M993 766 976 791" stroke="#3c3cf0" strokeWidth="9" />
      <path d="M993 766 976 791" stroke="#f0e400" strokeWidth="9" strokeDasharray="3 4" />
      <Face p="1092,782 1141,795 1122,832 1072,817" fill="#958d6e" />
      <Face p="1092,782 1141,795 1137,802 1112,798" fill="#bfb79a" />
      <Face p="1113,796 1137,802 1122,830 1101,825" fill="#53702e" />
      <ellipse cx="1108" cy="826" rx="8" ry="2.500" transform="rotate(14 1108 826)" fill="#c87040" stroke={LINE} />
      <Face p="1309,846 1351,883 1330,917 1287,880" fill="#df0303" />
      <Face p="1401,927 1443,964 1422,998 1380,960" fill="#df0303" />

      {/* olive plate */}
      <Face p="1041,532 1318,610 1256,708 1268,720 981,638 978,632" fill="#929067" />
      <path d="M978 632 1256 708" stroke={LINE} />
      <Face p="1318,610 1335,620 1274,719 1257,709" fill="#b3b073" />
      <Face p="1335,620 1625,872 1564,974 1274,718" fill="#a6a56d" />
      <path d="M1277 714 1568 968M1270 724 1556 977" stroke={LINE} strokeWidth="1.500" />
      <Face p="993,639 1018,646 1015,652 991,645" fill="#c818c8" />
      <Face p="1516,936 1543,959 1539,964 1512,942" fill="#e400e4" />
      <Face p="1543,960 1564,974 1556,973 1545,967" fill="#dcdca8" />

      {/* locks */}
      <Face p="1098,671 1134,682 1122,698 1090,690" fill="#6a9560" />
      <Face p="1110,658 1141,667 1136,679 1124,675 1114,691 1104,688 1113,672 1104,668" fill="#84a0b4" />
      <Face p="1395,833 1430,858 1417,880 1384,852" fill="#74a868" />
      <Face p="1405,820 1437,848 1430,859 1421,851 1410,866 1399,857 1407,840 1397,832" fill="#96b8d0" />
      <Face p="1217,703 1241,708 1260,717 1284,732 1310,755 1306,763 1282,743 1258,724 1240,715 1215,709" fill="#c04040" />
      <path d="M1336 740 1346 750 1344 762 1300 828 1294 828 1282 817 1284 808 1330 740Z" fill="#8c866a" stroke={LINE} strokeWidth="1.500" />
      <path d="M1300 826 1318 794" stroke={LINE} />
      <path d="M1330 743 1339 750 1340 757 1315 792 1303 785Z" fill="#ee0000" stroke={LINE} />
      {[[1329, 757], [1317, 777]].map(([x, y]) => (
        <g key={x} fill="#f0e800" stroke="#555500"><circle cx={x} cy={y} r="6" /><circle cx={x} cy={y} r="2.500" /></g>
      ))}

      {/* purple plate */}
      <Face p="1086,480 1343,549 1314,599 1318,610 1071,538 1056,529" fill="#66449e" />
      <path d="M1056 529 1314 599 1318 608 1070 536Z" fill="#6236b8" stroke={LINE} />
      <path d="M1056 529 1071 532 1068 539Z" fill="#b090f8" />
      <Face p="1343,550 1360,562 1331,610 1313,599" fill="#7340c8" />
      <Face p="1360,562 1650,815 1622,865 1330,610" fill="#6e41b8" />
      <path d="M1300 597 1318 601 1332 612 1340 620 1325 611Z" fill="#a080f0" stroke="#4a2a90" />

      {/* top clamp plate */}
      <Face p="1357,547 1383,537 1674,790 1674,802 1667,808 1648,810 1633,797 1372,567" fill="#808080" />
      <path d="M1369 553 1659 806M1376 552 1665 805" stroke="#444" strokeWidth="2" />
      <path d="M1365 558 1653 806" stroke="#adadad" strokeWidth="3" />
      <path d="M1364 562 1645 806" stroke="#444" strokeWidth="2" />
      <Face p="1090,454 1369,532 1357,547 1098,480 1083,466" fill="#737373" />
      <path d="M1088 470 1359 542" stroke={LINE} />
      <path d="M1085 467 1092 472 1094 480 1087 477Z" fill="#ccc" stroke={LINE} />
      <Face p="1367,532 1375,530 1384,538 1378,554 1357,547" fill="#8a8a8a" />
      <path d="M1091 453 1099 452 1375 528 1384 534 1676 787 1675 792 1383 538 1372 531Z" fill="#8a3a62" stroke={LINE} />

      {/* ejector limit switch cover */}
      <circle cx="1287" cy="1023" r="11" fill="#7d8d94" stroke={LINE} />
      <ellipse cx="1294" cy="1025" rx="12" ry="15" fill="#4080c0" stroke={LINE} />
      <ellipse cx="1294" cy="1025" rx="8" ry="10" fill="#5aa2e4" stroke="#234" />
      <path d="M1315 1036 1449 1152 1450 1158 1437 1178 1431 1177 1299 1061 1299 1056Z" fill="#dd9105" stroke={LINE} />
      <path d="M1397 1108 1382 1133" stroke={LINE} />
      {[[1310, 1057], [1345, 1088], [1377, 1115], [1396, 1131], [1433, 1164]].map(([x, y]) => (
        <g key={x}><circle cx={x} cy={y} r="4" fill="#b0720c" stroke={LINE} /><circle cx={x} cy={y} r="1.500" fill="#ddd" /></g>
      ))}
      <Mark x={1353} y={1077} r={41} size={7}>EJECTOR BOX LIMIT SWITCH</Mark>

      {/* holes and stamped marks */}
      {LEFT_HOLES.map(([x, y, kind, fill]) => (
        <g key={`${x}-${y}`} transform={`translate(${x} ${y}) rotate(25)`} stroke={LINE}>
          <ellipse rx="8" ry="10" fill={fill} />
          {kind === 'p' && <><ellipse rx="5" ry="7" fill="none" /><circle cx="3" cy="1" r="3.500" fill="#c4688c" /></>}
          {kind === 'd' && <circle r="3" fill="#d8b0bc" />}
        </g>
      ))}
      {RIGHT_HOLES.map(([x, y, fill, disc]) => (
        <g key={`${x}-${y}`} stroke={LINE}>
          <ellipse cx={x} cy={y} rx="9" ry="11" fill={fill} />
          {disc && <circle cx={x} cy={y} r="2" fill="none" />}
        </g>
      ))}
      {PINS.map(([x, y]) => <ellipse key={x} cx={x} cy={y} rx="3" ry="4" fill="#f090b0" stroke={LINE} strokeWidth="1.500" />)}
      {DOTS.map(([x, y]) => <ellipse key={x} cx={x} cy={y} rx="2" ry="3.500" transform={`rotate(15 ${x} ${y})`} fill="none" stroke="#222" strokeWidth="1.500" />)}
      {[[1227, 502], [977, 900], [965, 916], [951, 938], [858, 849], [1113, 920]].map(([x, y]) => (
        <ellipse key={x} cx={x} cy={y} rx="4" ry="5" transform={`rotate(25 ${x} ${y})`} fill="#999" fillOpacity=".4" stroke="#222" />
      ))}
      {LEFT_MARKS.map(([x, y, t, s]) => <Mark key={`${x}-${y}`} x={x} y={y} r={15} size={s}>{t}</Mark>)}
      {RIGHT_MARKS.map(([x, y, t, s]) => <Mark key={`${x}-${y}`} x={x} y={y} r={41} size={s}>{t}</Mark>)}
      <Mark x={1254} y={627} r={14} size={29} outline>40348</Mark>
      <Mark x={1180} y={746} r={14} size={29} outline>40348</Mark>
      <Mark x={1552} y={890} r={41} size={34} outline>40348</Mark>
      <Mark x={1487} y={995} r={41} size={34} outline>40348</Mark>

      {/* work coordinate system */}
      <g fontSize="14">
        <path d="M1342 889 1324 887 1307 879 1326 881Z" fill="#dc9090" />
        <path d="M1342 889 1364 911 1375 919 1367 906Z" fill="#7eb070" stroke="#7eb070" />
        <path d="M1338 893 1323 914 1311 935 1326 918Z" fill="#8aa4ff" stroke="#8aa4ff" strokeWidth="2" />
        <text x="1307" y="876" fill="#b83030">XC</text>
        <text x="1355" y="933" fill="#3a9a3a">YC</text>
        <text x="1314" y="949" fill="#2a4cf0">ZC</text>
      </g>
    </g>
  )
}

const Triad = () => (
  <g fontSize="12">
    <path d="M386 1236 410 1243 437 1266 414 1301 390 1294 363 1271ZM363 1271 389 1278 414 1301M389 1278 410 1243" fill="none" stroke="#aaa" />
    <path d="M415 1246 430 1222" stroke="#0a48f0" strokeWidth="4" />
    <path d="M438 1209 434 1226 424 1220Z" fill="#0a48f0" />
    <path d="M412 1272 432 1278" stroke="#c03030" strokeWidth="4" />
    <path d="M443 1281 428 1282 432 1272Z" fill="#b02828" />
    <path d="M423 1289 436 1300" stroke="#1e701e" strokeWidth="4" />
    <path d="M444 1307 431 1303 438 1295Z" fill="#1e701e" />
    <text x="439" y="1205" fill="#3a5cf0">Z</text>
    <text x="445" y="1286" fill="#d03030">X</text>
    <text x="447" y="1317" fill="#2a902a">Y</text>
  </g>
)

function Viewport() {
  return (
    <main className="flex min-w-0 flex-1 flex-col">
      <div className="mt-[22px] flex h-[30px] shrink-0 border-b-2 border-[#005f87]">
        <div className="flex h-[30px] w-[100px] items-center gap-1 bg-[#005f87] pl-1.5 text-base text-white">
          <svg viewBox="0 0 16 16" className="size-4"><path d="M8 1C5 4 3 7 1 12L6 15 14 12 15 8 9 6Z" fill="#b8b8b8" stroke="#777" /><ellipse cx="9" cy="10" rx="3" ry="2" fill="#666" /></svg>
          <span className="pl-0.5">1.prt</span>
          <svg viewBox="0 0 12 12" className="size-3" fill="none" stroke="#fff" strokeWidth="1.500"><path d="M2 1H8L10 3M2 1V11H9V9M5 8 11 4" /></svg>
          <button aria-label="关闭 1.prt">
            <svg viewBox="0 0 10 10" className="size-2.5" stroke="#fff" strokeWidth="2.200"><path d="M1 1 9 9M9 1 1 9" /></svg>
          </button>
        </div>
      </div>
      <div className="relative min-h-0 flex-1 border-l-2 border-[#a8a8a8] bg-linear-to-b from-[#b3b4b6] via-[#d6d7d9] via-50% to-[#e7e9ea] to-75%">
        <svg viewBox="294 257 1979 1123" preserveAspectRatio="xMidYMid meet" className="block h-full w-full font-['Liberation_Sans',Arial,sans-serif]" role="img" aria-label="模具装配">
          <Mould />
          <Triad />
        </svg>
        <div className="pointer-events-none absolute inset-0 border border-[#f59c42]" />
        <Osd />
      </div>
    </main>
  )
}

/* ---------- taskbar ---------- */

const APPS: { name: string; running?: boolean; active?: boolean; art: ReactNode }[] = [
  { name: '开始', art: <g fill="#1587dc"><path d="M1 1H15V15H1Z" fill="#3bb8f2" /><path d="M17 1H31V15H17Z" fill="#22a0e8" /><path d="M1 17H15V31H1Z" /><path d="M17 17H31V31H17Z" fill="#0a74d0" /></g> },
  { name: '搜索', art: <g fill="none" stroke="#222" strokeWidth="3"><circle cx="14" cy="14" r="11" /><path d="M22 22 30 30" strokeWidth="4" /></g> },
  {
    name: 'Edge', running: true,
    art: <g><circle cx="16" cy="16" r="15.500" fill="#0f6cbd" /><path d="M1 14C3 4 12 0 18 .5 27 1 32 9 31.500 16 31 22 23 22 20 20 22 17 20 11 14 10 8 9 3 11 1 14Z" fill="#3ec6d8" /><path d="M18 .5C27 1 32 9 31.500 16 31 22 23 22 20 20 24 15 22 7 18 .5Z" fill="#5be070" /><path d="M13 14C9 20 14 28 28 25 22 33 8 33 4 22 4 16 8 13 13 14Z" fill="#0b4a92" /><path d="M14 13C19 13 21 17 19.500 20 20 22 25 23 29 21 24 28 12 26 12 18 12 16 13 14 14 13Z" fill="#d8e4f8" /></g>,
  },
  {
    name: '浏览器', running: true,
    art: <g><circle cx="15" cy="18" r="12" fill="#1b8fe0" /><circle cx="13" cy="15" r="6" fill="#50e0f0" /><path d="M6 25C12 30 20 28 24 22" stroke="#30c060" strokeWidth="5" fill="none" /><path d="M2 29C10 31 28 22 30 13 30 9 27 7 23 8M2 29 7 26" stroke="#f5a010" strokeWidth="3" fill="none" /><path d="M2 3 16 1 11 14Z" fill="#d81840" /></g>,
  },
  { name: '文件', running: true, art: <g><path d="M0 4C0 3 1 2 2 2H12L15 6H30V12H0Z" fill="#d89a10" /><path d="M0 10H14L17 6H32V29H0Z" fill="#ffce48" /><path d="M5 30V25C5 23 6 22 8 22H24C26 22 27 23 27 25V30Z" fill="#1570c0" /><path d="M10 27H22" stroke="#0a4a88" strokeWidth="2" /></g> },
  { name: '应用商店', art: <g><path d="M10 8V3H22V8" fill="none" stroke="#28b8e8" strokeWidth="2" /><rect x="1" y="7" width="30" height="24" rx="3" fill="#184f80" /><path d="M10 13H15V18H10Z" fill="#f25022" /><path d="M17 13H22V18H17Z" fill="#7fba00" /><path d="M10 20H15V25H10Z" fill="#00a4ef" /><path d="M17 20H22V25H17Z" fill="#ffb900" /></g> },
  { name: 'Word', art: <g><path d="M8 1H31V9H8Z" fill="#41a5ee" /><path d="M8 9H31V16H8Z" fill="#2b7cd3" /><path d="M8 16H31V24H8Z" fill="#185abd" /><path d="M8 24H31V30H8Z" fill="#103f91" /><rect x="0" y="8" width="17" height="16" rx="1" fill="#1a56b4" /><text x="2" y="21" fontSize="13" fontWeight="bold" fill="#fff">W</text></g> },
  { name: 'Excel', art: <g><path d="M8 1H31V9H8Z" fill="#33c481" /><path d="M8 9H31V16H8Z" fill="#21a366" /><path d="M8 16H31V30H8Z" fill="#185c37" /><path d="M8 9H20V24H8Z" fill="#107c41" /><rect x="0" y="8" width="17" height="16" rx="1" fill="#107c41" /><text x="4" y="21" fontSize="13" fontWeight="bold" fill="#fff">X</text></g> },
  { name: '微信', art: <g><ellipse cx="12" cy="13" rx="11.500" ry="10" fill="#2bc864" /><path d="M4 20 3 26 10 22Z" fill="#2bc864" /><circle cx="8" cy="10" r="1.500" fill="#167a3a" /><circle cx="16" cy="10" r="1.500" fill="#167a3a" /><ellipse cx="23" cy="20" rx="9.500" ry="8" fill="#e6e6e6" /><circle cx="20" cy="18" r="1.200" fill="#777" /><circle cx="26" cy="18" r="1.200" fill="#777" /></g> },
  { name: 'NX', running: true, active: true, art: <g><path d="M0 5H27V32H0Z" fill="#009a9a" /><path d="M5 0H32V28H5Z" fill="#8f120c" /><text x="18.500" y="20" fontSize="15" fontWeight="bold" textAnchor="middle" fill="#fff">NX</text></g> },
  { name: 'AIDA64', running: true, art: <g><path d="M0 0H32V32H0Z" fill="#c00000" /><text x="16" y="24" fontSize="25" fontWeight="bold" textAnchor="middle" fill="#fff">64</text></g> },
  { name: '设置工具', running: true, art: <g fill="none"><circle cx="15" cy="14" r="10" stroke="#4d80e8" strokeWidth="4" strokeDasharray="5 2" /><path d="M6 21C12 32 24 28 26 20" stroke="#7858e8" strokeWidth="4" strokeDasharray="6 2" /><circle cx="18" cy="12" r="7" stroke="#f59a30" strokeWidth="2.500" /><path d="M10 14A6 6 0 0 0 18 20" stroke="#4d80e8" strokeWidth="3" /></g> },
  { name: 'NVIDIA', running: true, art: <g><path d="M0 0H32V32H0Z" fill="#1c1c1c" /><path d="M14 7H27V24H14Z" fill="#76b900" /><path d="M4 15C9 7 20 8 24 15 19 22 10 24 4 15Z" fill="#1c1c1c" stroke="#76b900" strokeWidth="1.800" /><path d="M9 15C12 10 18 11 20 15 17 19 12 20 9 15Z" fill="none" stroke="#76b900" strokeWidth="1.800" /><circle cx="14.500" cy="15" r="2" fill="#76b900" /></g> },
  { name: '性能监视', running: true, art: <g><path d="M0 4H32V28H0Z" fill="#0a68b4" /><path d="M0 18 5 16 9 9 14 22 19 12 23 18 27 11 32 18V28H0Z" fill="#7cc8f4" /></g> },
  { name: '截图工具', running: true, art: <g fill="none"><rect x="0" y="1" width="22" height="22" rx="3" fill="#f8f4f2" /><path d="M14 4H5V15" stroke="#d83b20" strokeWidth="3" strokeDasharray="3 2" /><path d="M18 4V18H27M9 16H18V26" stroke="#8090a0" strokeWidth="3" /><circle cx="28" cy="18" r="3" stroke="#28a0e0" strokeWidth="2" /><circle cx="17" cy="28" r="3" stroke="#28a0e0" strokeWidth="2" /></g> },
]

function Taskbar() {
  return (
    <footer className="relative flex h-[59px] shrink-0 items-center justify-between border-t border-[#b0b4bc] bg-linear-to-r from-[#dfecf7] from-5% via-[#d6dff6] via-45% to-[#e0ebf6] to-80%">
      <div className="flex pl-[581px]">
        {APPS.map(a => (
          <button key={a.name} aria-label={a.name} className="flex w-[55px] justify-center">
            <span className={a.active ? 'flex h-12 w-12 flex-col items-center rounded-md bg-[#e9eef9] pt-2' : 'flex h-12 w-12 flex-col items-center pt-2'}>
              <svg viewBox="0 0 32 32" className="size-[30px] font-['Liberation_Sans',Arial,sans-serif]">{a.art}</svg>
              {a.running && <span className={a.active ? 'mt-1.5 h-1 w-5 rounded-full bg-[#0078d4]' : 'mt-1.5 h-1 w-2 rounded-full bg-[#7e838f]'} />}
            </span>
          </button>
        ))}
      </div>
      <div className="flex items-center pr-6 text-[#1a1a1a]">
        <button aria-label="显示隐藏的图标" className="mr-5"><ChevronUp size={20} /></button>
        <button className="mr-7 text-[20px]">中</button>
        <button className="mr-6 text-[20px]">拼</button>
        <button aria-label="网络" className="mr-2.5"><Wifi size={21} strokeWidth={1.8} /></button>
        <button aria-label="音量" className="mr-6"><Volume2 size={20} strokeWidth={1.5} /></button>
        <button className="mr-2.5 text-right font-['Noto_Sans',sans-serif] text-[14px] leading-[21px]">
          <time className="block">20:32</time>
          <time className="block">2025/6/3</time>
        </button>
        <button aria-label="通知">
          <svg viewBox="0 0 18 20" className="h-5 w-[18px]"><path d="M1 16 3 13V7C3 3 6 1 9 1 13 1 15 4 15 7V13L17 16ZM7 17H11L9 19Z" fill="#1a1a1a" /><path d="M7 7H11L7 12H11M12 1H16L12 5H16" stroke="#fff" strokeWidth="1.300" fill="none" /></svg>
        </button>
      </div>
      <p className="pointer-events-none absolute right-1 bottom-0 flex items-center leading-5 whitespace-pre text-[#777] [text-shadow:1px_1px_0_#fff]">
        <span className="font-['Liberation_Mono',monospace] text-[13px]">UG</span>
        <span className="text-base">爱好者论坛</span>
        <span className="font-['Liberation_Mono',monospace] text-[13px]"> WWW.UG3NX.COM</span>
      </p>
    </footer>
  )
}

export default function App() {
  return (
    <div className="flex h-screen flex-col overflow-hidden bg-[#efefef] font-['Noto_Sans','Noto_Sans_CJK_SC',sans-serif] text-[#1a1a1a]">
      <TitleBar />
      <Ribbon />
      <SelectionBar />
      <div className="flex min-h-0 flex-1 gap-[11px]">
        <Navigator />
        <Viewport />
      </div>
      <Taskbar />
    </div>
  )
}
